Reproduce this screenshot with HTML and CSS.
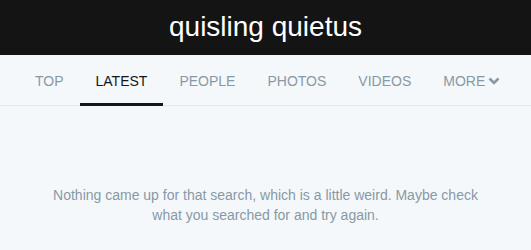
FILE: index.html
```html
<!DOCTYPE html>
<html lang="en">
<head>
    <meta charset="UTF-8">
    <title>quisling quietus - Search</title>
    <link rel="stylesheet" href="styles.css">
</head>
<body>
    <header class="topbar">
        <h1>quisling quietus</h1>
    </header>
    <nav class="tabs">
        <a class="tab">TOP</a>
        <a class="tab active">LATEST</a>
        <a class="tab">PEOPLE</a>
        <a class="tab">PHOTOS</a>
        <a class="tab">VIDEOS</a>
        <a class="tab">MORE
            <svg class="chev" viewBox="0 0 12 8" width="12" height="8"><path d="M1.5 1.5 L6 6 L10.5 1.5" fill="none" stroke="currentColor" stroke-width="2.6"/></svg>
        </a>
    </nav>
    <main class="empty">
        <p>Nothing came up for that search, which is a little weird. Maybe check<br>what you searched for and try again.</p>
    </main>
</body>
</html>
```

FILE: styles.css
```css
body { margin: 0; background: #f5f8fa; font-family: "Liberation Sans", Arial, sans-serif; }
.topbar { background: #141414; height: 55px; display: flex; align-items: center; justify-content: center; }
.topbar h1 { margin: 0; color: #fff; font-weight: normal; font-size: 28px; line-height: 1; padding-bottom: 2px; }
.tabs { display: flex; padding-left: 19px; border-bottom: 1px solid #e1e8ed; height: 50px; }
.tab { display: flex; align-items: center; gap: 3px; padding: 0 16px; font-size: 14px; color: #8899a6; border-bottom: 3px solid transparent; margin-bottom: -1px; padding-top: 3px; }
.tab.active { color: #14171a; border-bottom-color: #14171a; }
.chev { margin-top: 1px; }
.empty { text-align: center; padding-top: 79px; }
.empty p { margin: 0; font-size: 14px; line-height: 20px; color: #8899a6; }
```
